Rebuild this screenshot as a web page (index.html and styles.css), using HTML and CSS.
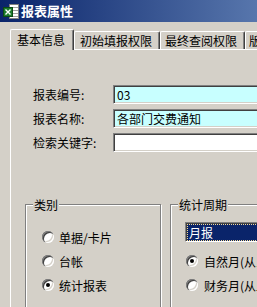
FILE: index.html
```html
<!DOCTYPE html>
<html lang="zh">
<head>
<meta charset="utf-8">
<title>报表属性</title>
<link rel="stylesheet" href="styles.css">
</head>
<body>
<div class="window">
  <div class="titlebar">
    <svg class="title-icon" viewBox="0 0 16 16" width="16" height="16">
      <rect x="6.5" y="1.5" width="9" height="14" fill="#fff" stroke="#808080"/>
      <path d="M10 4.5h5M10 7.5h5M10 10.5h5M10 13.5h5" stroke="#a0a0a0"/>
      <rect x="0" y="4" width="10" height="10" fill="#1c7c2c"/>
      <rect x="0.5" y="4.5" width="9" height="9" fill="none" stroke="#0c4a14"/>
      <path d="M2.5 6.5l5 5M7.5 6.5l-5 5" stroke="#fff" stroke-width="1.4"/>
    </svg>
    <span class="title-text">报表属性</span>
  </div>
  <div class="tabs">
    <div class="tab tab-active tab-1">基本信息</div>
    <div class="tab tab-2">初始填报权限</div>
    <div class="tab tab-3">最终查阅权限</div>
    <div class="tab tab-4">版本</div>
  </div>
  <div class="panel">
    <div class="form">
      <div class="label">报表编号:</div>
      <div class="input input-hl">03</div>
      <div class="label">报表名称:</div>
      <div class="input input-hl">各部门交费通知</div>
      <div class="label">检索关键字:</div>
      <div class="input"></div>
    </div>
    <div class="groups">
      <div class="group group-1">
        <span class="group-label">类别</span>
        <div class="option"><span class="radio"></span><span>单据/卡片</span></div>
        <div class="option"><span class="radio"></span><span>台帐</span></div>
        <div class="option"><span class="radio checked"></span><span>统计报表</span></div>
      </div>
      <div class="group group-2">
        <span class="group-label">统计周期</span>
        <div class="combo"><div class="combo-sel">月报</div></div>
        <div class="option"><span class="radio checked"></span><span>自然月(从1日到月末)</span></div>
        <div class="option"><span class="radio"></span><span>财务月(从上月)</span></div>
      </div>
    </div>
  </div>
</div>
</body>
</html>
```
FILE: styles.css
```css
* { box-sizing: border-box; }
html, body { margin: 0; padding: 0; }
body {
  width: 257px;
  height: 307px;
  overflow: hidden;
  background: #d4d0c8;
  font-family: "Noto Sans CJK SC", "Liberation Sans", sans-serif;
  font-size: 12px;
  color: #000;
}
.window { width: 520px; }

.titlebar {
  height: 22px;
  display: flex;
  align-items: center;
  gap: 2px;
  padding-left: 3px;
  background: linear-gradient(to right, #0a246a, #a6caf0);
  color: #fff;
  font-weight: bold;
  font-size: 13px;
}
.title-icon { flex: none; display: block; }
.title-text { line-height: 16px; }

.tabs {
  display: flex;
  align-items: flex-end;
  height: 20px;
  margin-top: 7px;
  padding-left: 10px;
}
.tab {
  height: 18px;
  border-top: 1px solid #fff;
  border-left: 1px solid #fff;
  border-right: 1px solid #404040;
  border-radius: 2px 2px 0 0;
  box-shadow: inset -1px 0 0 #808080;
  line-height: 16px;
  padding-top: 1px;
  white-space: nowrap;
  overflow: hidden;
  flex: none;
}
.tab-active {
  position: relative;
  height: 21px;
  margin-bottom: -1px;
  background: #d4d0c8;
  padding-top: 2px;
}
.tab-1 { width: 64px; padding-left: 6px; }
.tab-2 { width: 86px; padding-left: 5px; }
.tab-3 { width: 85px; padding-left: 4px; }
.tab-4 { width: 60px; padding-left: 3px; }

.panel {
  margin-left: 10px;
  border-top: 1px solid #fff;
  border-left: 1px solid #fff;
  height: 300px;
  padding: 35px 0 0 22px;
}

.form {
  display: grid;
  grid-template-columns: 80px 300px;
  grid-auto-rows: 19px;
  row-gap: 5px;
}
.label { line-height: 19px; }
.input {
  height: 19px;
  background: #fff;
  border-top: 1px solid #808080;
  border-left: 1px solid #808080;
  border-bottom: 1px solid #fff;
  border-right: 1px solid #fff;
  box-shadow: inset 1px 1px 0 #404040, inset -1px -1px 0 #d4d0c8;
  padding-left: 3px;
  line-height: 17px;
}
.input-hl { background: #c8ffff; }

.groups {
  display: flex;
  gap: 9px;
  margin-top: 52px;
  margin-left: -8px;
}
.group {
  position: relative;
  height: 120px;
  border: 1px solid #808080;
  box-shadow: inset 1px 1px 0 #fff, 1px 1px 0 #fff;
  flex: none;
}
.group-1 { width: 136px; padding: 20px 0 0 16px; }
.group-2 { width: 200px; padding: 17px 0 0 14px; }
.group-label {
  position: absolute;
  top: -8px;
  left: 7px;
  padding: 0 1px;
  background: #d4d0c8;
  line-height: 16px;
}
.option {
  display: flex;
  align-items: center;
  gap: 5px;
  height: 24px;
  white-space: nowrap;
}
.group-2 .option { padding-left: 1px; gap: 6px; }
.radio {
  position: relative;
  width: 12px;
  height: 12px;
  border-radius: 50%;
  background: #fff;
  flex: none;
  box-shadow: inset 1px 1px 0 #808080, inset 2px 2px 0 #404040, inset -1px -1px 0 #fff, inset -2px -2px 0 #d4d0c8;
}
.radio.checked::after {
  content: "";
  position: absolute;
  left: 4px;
  top: 4px;
  width: 4px;
  height: 4px;
  border-radius: 50%;
  background: #000;
}

.combo {
  width: 200px;
  height: 20px;
  border-top: 1px solid #808080;
  border-left: 1px solid #808080;
  border-bottom: 1px solid #fff;
  border-right: 1px solid #fff;
  box-shadow: inset 1px 1px 0 #404040;
  padding: 1px 0 0 1px;
  margin-bottom: 7px;
  background: #d4d0c8;
}
.combo-sel {
  height: 17px;
  background: #0a246a;
  border: 1px dotted #f5db95;
  color: #fff;
  line-height: 15px;
  padding-left: 1px;
}
```
